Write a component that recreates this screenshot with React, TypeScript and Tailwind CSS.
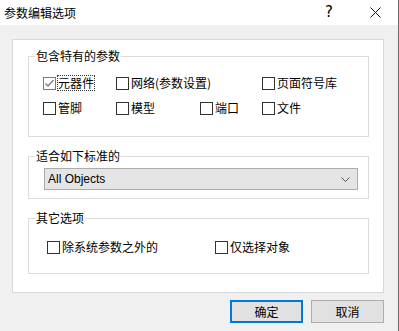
import React from "react";

const cjk = { fontFamily: '"Microsoft YaHei", "Noto Sans CJK SC", "Liberation Sans", sans-serif' };

const Box = ({ checked }: { checked?: boolean }) => (
  <span
    className={`inline-flex h-[13px] w-[13px] shrink-0 items-center justify-center border bg-white ${
      checked ? "border-[#7a7a7a]" : "border-[#333333]"
    }`}
  >
    {checked && (
      <svg width="11" height="11" viewBox="0 0 11 11">
        <path d="M1.5 5.5 L4 8 L9.5 2" fill="none" stroke="#7a7a7a" strokeWidth="1.3" />
      </svg>
    )}
  </span>
);

const Check = ({ label, checked, focus }: { label: string; checked?: boolean; focus?: boolean }) => (
  <label className="flex h-[16px] items-center">
    <Box checked={checked} />
    <span
      className={`ml-[2px] leading-[14px] ${focus ? "outline-1 outline-dotted outline-[#333]" : ""}`}
    >
      {label}
    </span>
  </label>
);

const Group = ({
  title,
  className,
  children,
}: {
  title: string;
  className: string;
  children: React.ReactNode;
}) => (
  <div className={`relative border border-[#dcdcdc] ${className}`}>
    <span className="absolute left-[6px] top-[-9px] bg-white px-[1px] leading-[16px]">{title}</span>
    {children}
  </div>
);

export default function App() {
  return (
    <div
      className="flex h-[331px] w-[399px] flex-col overflow-hidden border-r border-[#6b6b6b] bg-[#f0f0f0] text-[12px] text-black"
      style={cjk}
    >
      <div className="flex h-[25px] shrink-0 items-center bg-white pl-[4px]">
        <span className="leading-[16px]">参数编辑选项</span>
        <span className="ml-auto mr-[37px] text-[15px] leading-none" style={{ fontFamily: '"Segoe UI", "DejaVu Sans", sans-serif' }}>
          ?
        </span>
        <svg className="mr-[17px]" width="11" height="11" viewBox="0 0 11 11">
          <path d="M0.5 0.5 L10.5 10.5 M10.5 0.5 L0.5 10.5" stroke="#111" strokeWidth="1" />
        </svg>
      </div>

      <div className="flex flex-1 flex-col pl-[12px] pr-[14px] pt-[14px]">
        <div className="h-[254px] border border-[#d9d9d9] bg-white pl-[15px] pr-[14px] pt-[16px]">
          <Group title="包含特有的参数" className="h-[81px]">
            <div className="grid grid-cols-[73px_84px_62px_1fr] gap-y-[9px] pl-[14px] pt-[18px]">
              <Check label="元器件" checked focus />
              <div className="col-span-2">
                <Check label="网络(参数设置)" />
              </div>
              <Check label="页面符号库" />
              <Check label="管脚" />
              <Check label="模型" />
              <Check label="端口" />
              <Check label="文件" />
            </div>
          </Group>

          <Group title="适合如下标准的" className="mt-[19px] h-[43px]">
            <div className="pl-[15px] pt-[11px]">
              <div className="flex h-[22px] w-[314px] items-center border border-[#acacac] bg-[#e5e5e5] pl-[3px] pr-[5px]">
                <span className="text-[12px]" style={{ fontFamily: '"Liberation Sans", Arial, sans-serif' }}>
                  All Objects
                </span>
                <svg className="ml-auto mr-[2px]" width="9" height="5" viewBox="0 0 9 5">
                  <path d="M0.5 0.5 L4.5 4.5 L8.5 0.5" fill="none" stroke="#555" strokeWidth="1" />
                </svg>
              </div>
            </div>
          </Group>

          <Group title="其它选项" className="mt-[19px] h-[56px]">
            <div className="grid grid-cols-[168px_1fr] pl-[18px] pt-[20px]">
              <Check label="除系统参数之外的" />
              <Check label="仅选择对象" />
            </div>
          </Group>
        </div>

        <div className="mt-[7px] flex justify-end gap-[8px]">
          <button className="h-[23px] w-[73px] border-2 border-[#0078d7] bg-[#e1e1e1] leading-[16px]">确定</button>
          <button className="h-[23px] w-[73px] border border-[#adadad] bg-[#e1e1e1] leading-[16px]">取消</button>
        </div>
      </div>
    </div>
  );
}
